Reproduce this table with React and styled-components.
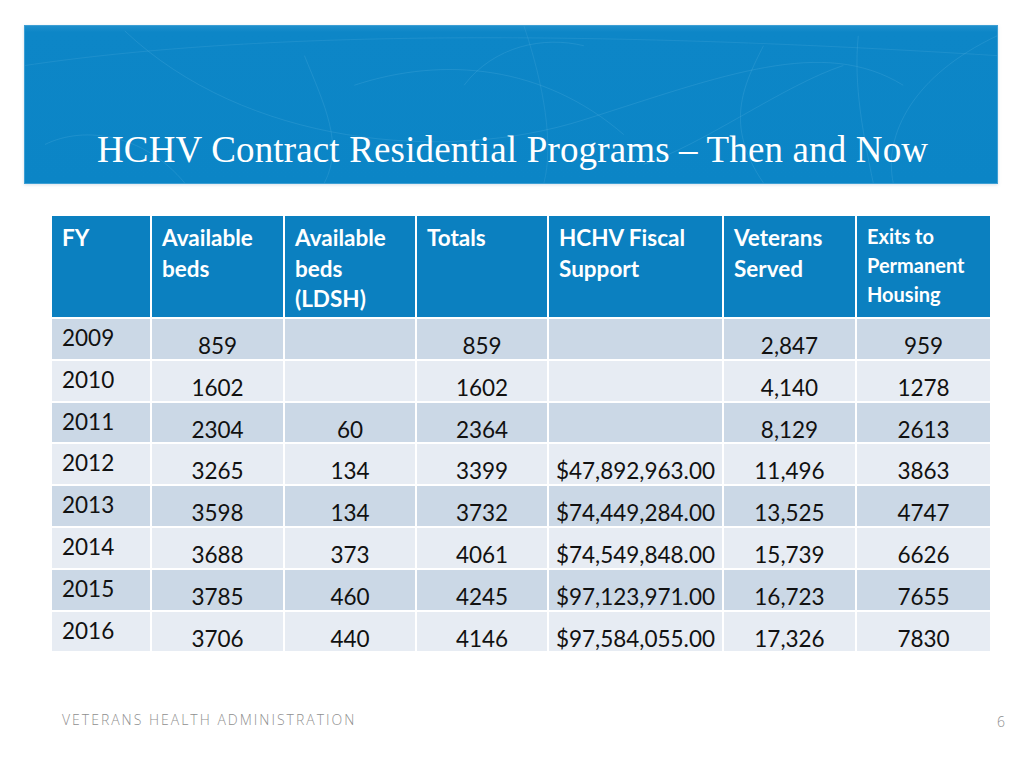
import React from "react";
import styled, { createGlobalStyle } from "styled-components";

const Global = createGlobalStyle`
  html, body { margin: 0; padding: 0; background: #fff; }
  * { box-sizing: border-box; }
`;

const Page = styled.div`
  width: 1024px;
  height: 768px;
  padding-top: 25px;
  display: flex;
  flex-direction: column;
  background: #fff;
`;

const Banner = styled.header`
  position: relative;
  margin-left: 24px;
  width: 974px;
  height: 159px;
  background: linear-gradient(180deg, #1e8fcc 0px, #0d86c7 6px, #0b85c6 100%);
  border: 1px solid #3d9fd4;
  box-shadow: 0 1px 3px rgba(150, 170, 190, 0.35);
  overflow: hidden;
  display: flex;
  align-items: flex-end;
  padding: 0 0 12px 72px;
`;

const Texture = styled.svg`
  position: absolute;
  inset: 0;
  width: 100%;
  height: 100%;
`;

const Title = styled.h1`
  position: relative;
  margin: 0;
  font-family: "Liberation Serif", "DejaVu Serif", serif;
  font-weight: normal;
  font-size: 37px;
  color: #fff;
  letter-spacing: 0.15px;
`;

const Table = styled.div`
  margin: 32px 0 0 52px;
  width: 938px;
  display: grid;
  grid-template-columns: 98px 131px 130px 130px 173px 131px 133px;
  grid-template-rows: 101px;
  grid-auto-rows: 39.8px;
  gap: 2px;
  font-family: Lato, "Open Sans", sans-serif;
`;

const Head = styled.div`
  background: #0b80c0;
  color: #fff;
  font-weight: bold;
  font-size: ${(p) => (p.small ? "20px" : "22.5px")};
  line-height: ${(p) => (p.small ? "29px" : "30.5px")};
  padding: ${(p) => (p.small ? "6px 10px" : "7px 10px")};
  white-space: nowrap;
`;

const Cell = styled.div`
  background: ${(p) => (p.odd ? "#cbd8e6" : "#e7ecf3")};
  color: #111;
  font-size: 22.5px;
  display: flex;
  justify-content: ${(p) => (p.year ? "flex-start" : "center")};
  align-items: flex-start;
  padding: ${(p) => (p.year ? "6px 10px 0" : "14px 2px 0")};
  line-height: 26px;
`;

const Footer = styled.footer`
  margin-top: auto;
  height: 58px;
  display: flex;
  justify-content: space-between;
  padding: 0 19px 0 62px;
  font-family: "Open Sans", Lato, sans-serif;
  font-weight: 300;
  color: #8f8f8f;
`;

const Org = styled.span`
  font-size: 14px;
  letter-spacing: 2px;
`;

const PageNum = styled.span`
  font-size: 14px;
  padding-top: 2px;
`;

const heads = [
  ["FY"],
  ["Available", "beds"],
  ["Available", "beds", "(LDSH)"],
  ["Totals"],
  ["HCHV Fiscal", "Support"],
  ["Veterans", "Served"],
];

const rows = [
  ["2009", "859", "", "859", "", "2,847", "959"],
  ["2010", "1602", "", "1602", "", "4,140", "1278"],
  ["2011", "2304", "60", "2364", "", "8,129", "2613"],
  ["2012", "3265", "134", "3399", "$47,892,963.00", "11,496", "3863"],
  ["2013", "3598", "134", "3732", "$74,449,284.00", "13,525", "4747"],
  ["2014", "3688", "373", "4061", "$74,549,848.00", "15,739", "6626"],
  ["2015", "3785", "460", "4245", "$97,123,971.00", "16,723", "7655"],
  ["2016", "3706", "440", "4146", "$97,584,055.00", "17,326", "7830"],
];

function BannerTexture() {
  return (
    <Texture viewBox="0 0 974 159" preserveAspectRatio="none">
      <g fill="none" stroke="#6cbde6" strokeOpacity="0.2" strokeWidth="1">
        <path d="M100 5 C 220 120, 420 140, 560 95 S 800 10, 880 60" />
        <path d="M330 60 C 420 30, 520 40, 600 110" />
        <path d="M740 20 C 720 60, 700 100, 740 159" />
        <path d="M870 159 C 860 110, 890 50, 974 10" />
        <path d="M835 10 C 830 60, 840 110, 850 159" />
        <path d="M280 30 C 300 80, 320 120, 300 159" />
        <path d="M20 120 C 60 100, 120 110, 160 159" />
        <path d="M620 140 C 680 120, 760 60, 820 40" />
        <path d="M440 60 C 470 20, 520 10, 560 20" />
      </g>
      <g fill="none" stroke="#8fcdef" strokeOpacity="0.13" strokeWidth="1">
        <path d="M0 40 C 200 10, 500 0, 974 30" />
        <path d="M500 0 C 520 60, 530 120, 520 159" />
      </g>
    </Texture>
  );
}

export default function App() {
  return (
    <Page>
      <Global />
      <Banner>
        <BannerTexture />
        <Title>HCHV Contract Residential Programs – Then and Now</Title>
      </Banner>
      <Table>
        {heads.map((h, i) => (
          <Head key={i}>
            {h.map((line, j) => (
              <div key={j}>{line}</div>
            ))}
          </Head>
        ))}
        <Head small>
          <div>Exits to</div>
          <div>Permanent</div>
          <div>Housing</div>
        </Head>
        {rows.map((r, ri) =>
          r.map((v, ci) => (
            <Cell key={ri + "-" + ci} odd={ri % 2 === 0} year={ci === 0}>
              {v}
            </Cell>
          ))
        )}
      </Table>
      <Footer>
        <Org>VETERANS HEALTH ADMINISTRATION</Org>
        <PageNum>6</PageNum>
      </Footer>
    </Page>
  );
}
